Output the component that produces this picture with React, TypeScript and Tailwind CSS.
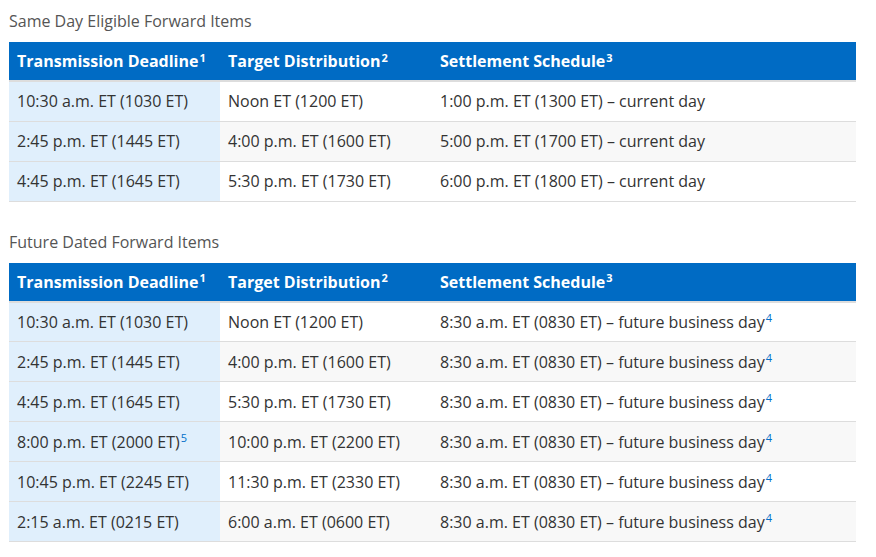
import React from "react";

type Row = {
  deadline: string;
  deadlineNote?: string;
  target: string;
  settle: string;
  settleNote?: string;
};

const sameDay: Row[] = [
  { deadline: "10:30 a.m. ET (1030 ET)", target: "Noon ET (1200 ET)", settle: "1:00 p.m. ET (1300 ET) – current day" },
  { deadline: "2:45 p.m. ET (1445 ET)", target: "4:00 p.m. ET (1600 ET)", settle: "5:00 p.m. ET (1700 ET) – current day" },
  { deadline: "4:45 p.m. ET (1645 ET)", target: "5:30 p.m. ET (1730 ET)", settle: "6:00 p.m. ET (1800 ET) – current day" },
];

const future: Row[] = [
  { deadline: "10:30 a.m. ET (1030 ET)", target: "Noon ET (1200 ET)", settle: "8:30 a.m. ET (0830 ET) – future business day", settleNote: "4" },
  { deadline: "2:45 p.m. ET (1445 ET)", target: "4:00 p.m. ET (1600 ET)", settle: "8:30 a.m. ET (0830 ET) – future business day", settleNote: "4" },
  { deadline: "4:45 p.m. ET (1645 ET)", target: "5:30 p.m. ET (1730 ET)", settle: "8:30 a.m. ET (0830 ET) – future business day", settleNote: "4" },
  { deadline: "8:00 p.m. ET (2000 ET)", deadlineNote: "5", target: "10:00 p.m. ET (2200 ET)", settle: "8:30 a.m. ET (0830 ET) – future business day", settleNote: "4" },
  { deadline: "10:45 p.m. ET (2245 ET)", target: "11:30 p.m. ET (2330 ET)", settle: "8:30 a.m. ET (0830 ET) – future business day", settleNote: "4" },
  { deadline: "2:15 a.m. ET (0215 ET)", target: "6:00 a.m. ET (0600 ET)", settle: "8:30 a.m. ET (0830 ET) – future business day", settleNote: "4" },
];

// footnote marker in body cells
function Note({ n }: { n: string }) {
  return <sup className="ml-[1px] text-[11px] text-[#0070c9]">{n}</sup>;
}

function Schedule({ title, rows }: { title: string; rows: Row[] }) {
  return (
    <section>
      <h3 className="pb-[10px] pt-[10px] text-[16px] leading-[22px] text-[#555]">{title}</h3>
      <table className="w-[847px] border-collapse text-left">
        <thead>
          <tr className="border-b-2 border-[#dddddd] bg-[#006bc4] text-white">
            <th className="h-[39px] w-[211px] px-2 text-[16px] font-bold">
              Transmission Deadline<sup className="ml-[1px] text-[11px]">1</sup>
            </th>
            <th className="w-[212px] px-2 text-[16px] font-bold">
              Target Distribution<sup className="ml-[1px] text-[11px]">2</sup>
            </th>
            <th className="px-2 text-[16px] font-bold">
              Settlement Schedule<sup className="ml-[1px] text-[11px]">3</sup>
            </th>
          </tr>
        </thead>
        <tbody>
          {rows.map((r, i) => (
            <tr
              key={r.deadline}
              className={`border-b border-[#dddddd] text-[16px] text-[#333] ${i % 2 ? "bg-[#f8f8f8]" : "bg-white"}`}
            >
              <td className="h-[40px] bg-[#e0effc] px-2">
                {r.deadline}
                {r.deadlineNote && <Note n={r.deadlineNote} />}
              </td>
              <td className="px-2">{r.target}</td>
              <td className="px-2">
                {r.settle}
                {r.settleNote && <Note n={r.settleNote} />}
              </td>
            </tr>
          ))}
        </tbody>
      </table>
    </section>
  );
}

export default function App() {
  return (
    <div className="flex h-[557px] w-[876px] flex-col gap-[19px] bg-white pl-[9px] font-['Open_Sans',sans-serif]">
      <Schedule title="Same Day Eligible Forward Items" rows={sameDay} />
      <Schedule title="Future Dated Forward Items" rows={future} />
    </div>
  );
}
